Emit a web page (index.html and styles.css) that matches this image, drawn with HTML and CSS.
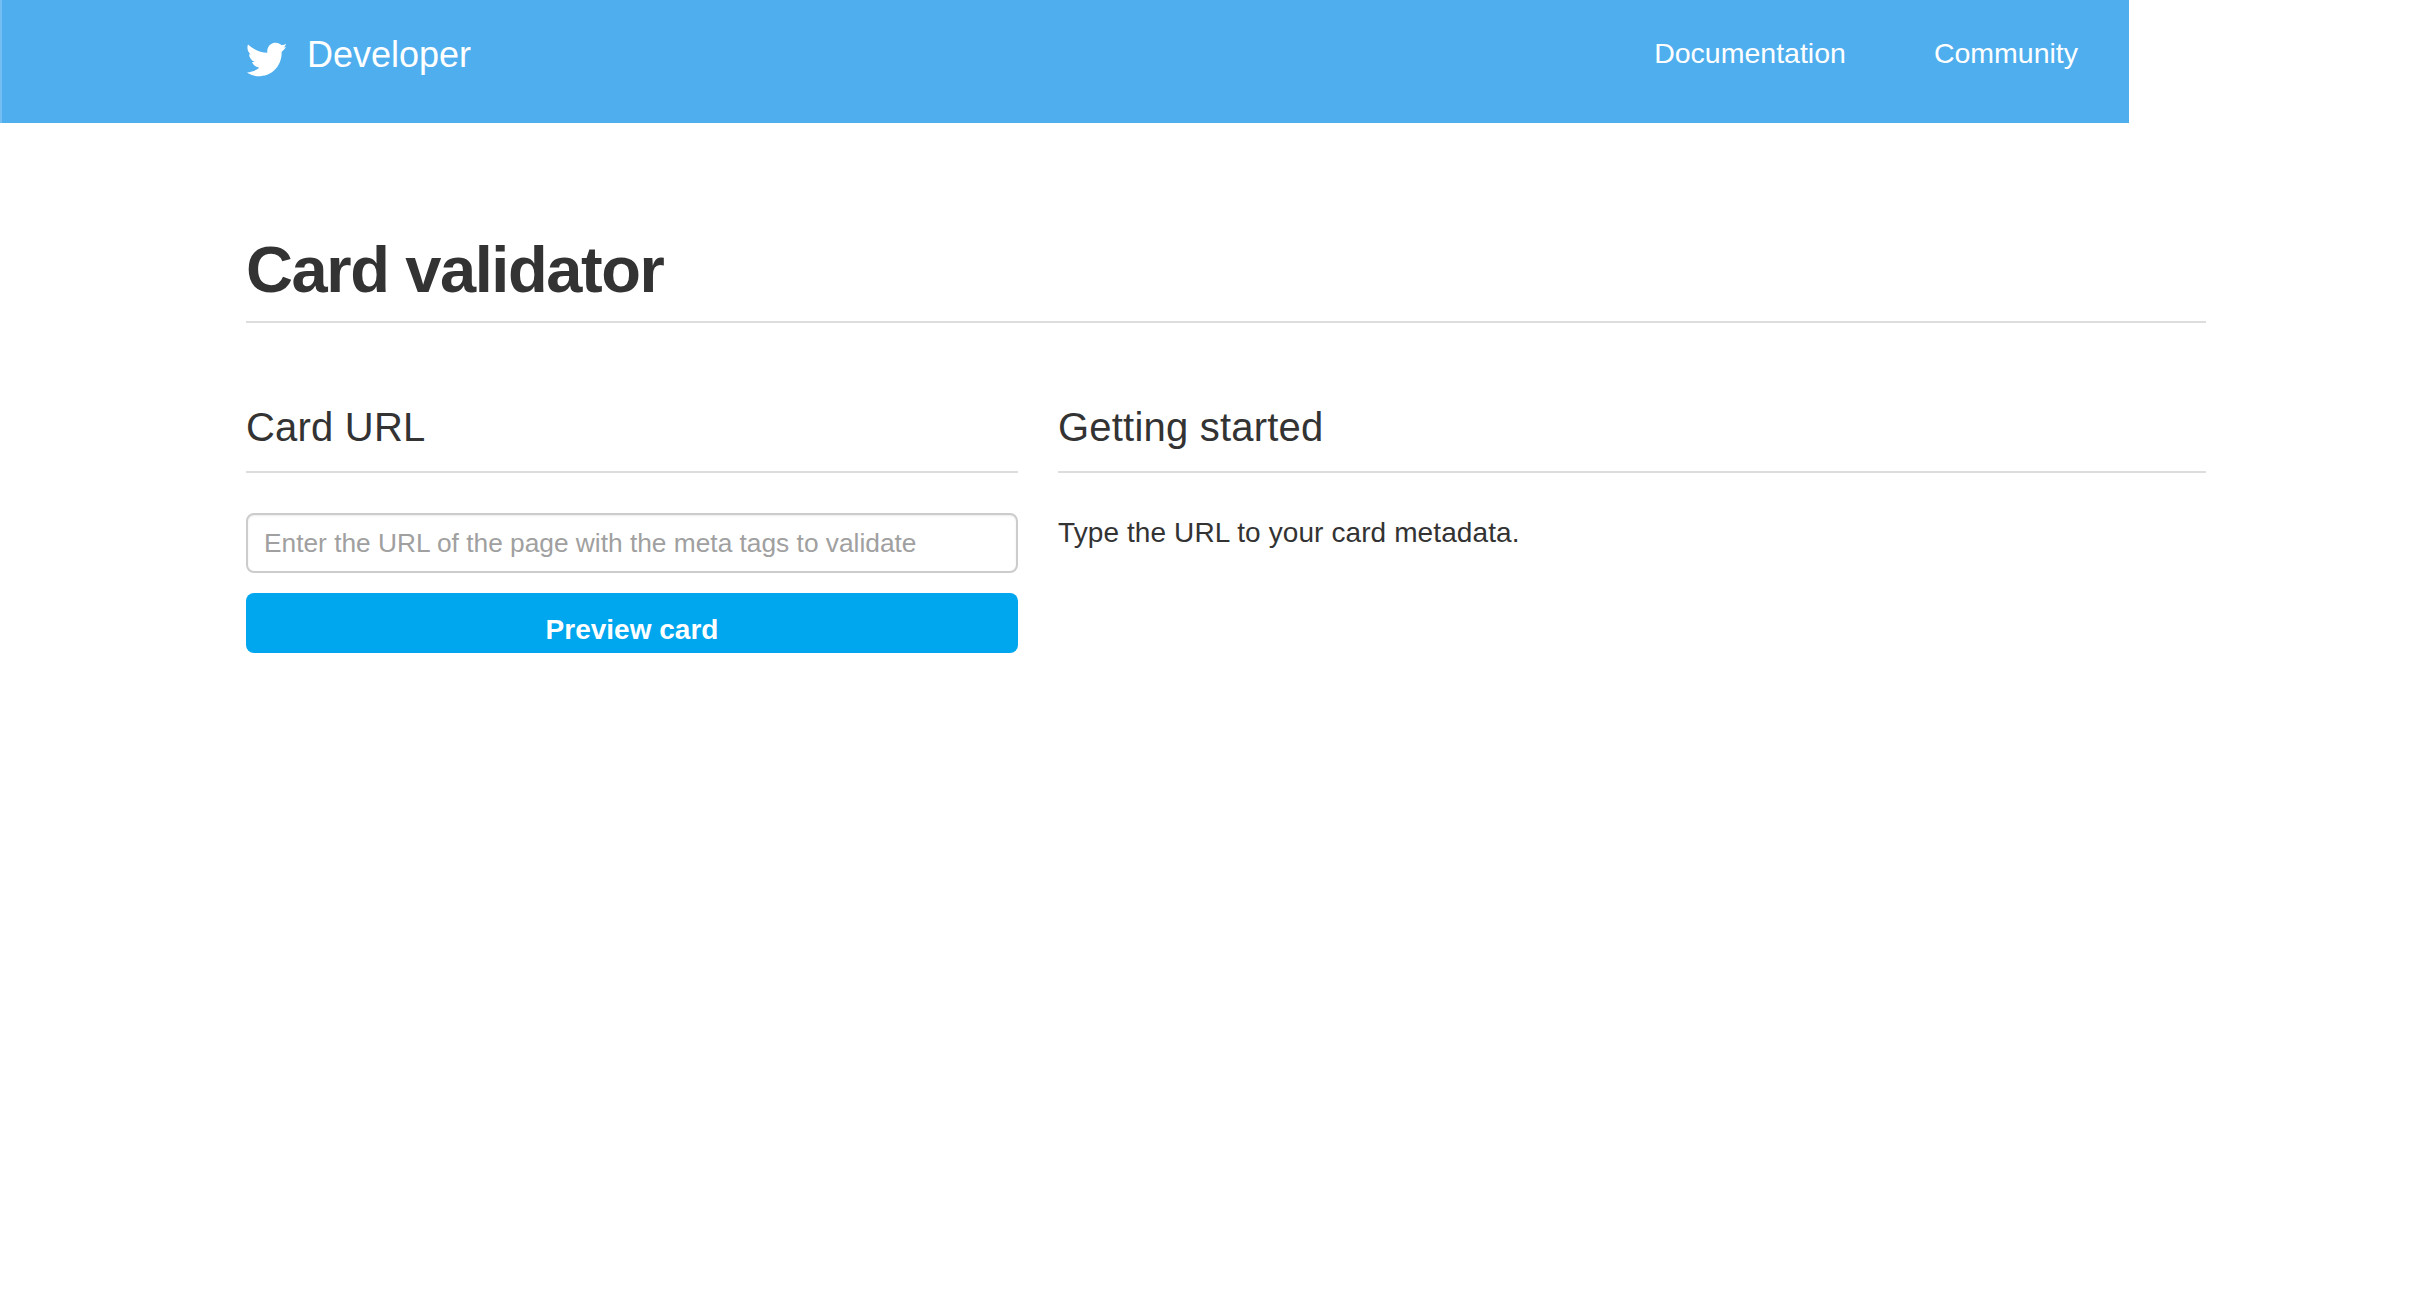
FILE: index.html
```html
<!DOCTYPE html>
<html lang="en">
<head>
<meta charset="utf-8">
<title>Card validator</title>
<link rel="stylesheet" href="styles.css">
</head>
<body>
<header class="topbar">
  <a class="brand" href="#">
    <svg class="bird" viewBox="48 68 126 104" aria-hidden="true"><path d="M168 73C163 76 159 77 155 77C150 72 142 69 134 70C120 72 110 84 112 100C90 99 70 90 54 75C50 85 53 97 62 105L57 104C58 114 64 123 74 127L66 128C70 137 78 143 88 145C78 153 66 157 51 159C62 167 76 171 91 170C132 168 156 134 155 97C160 93 165 88 168 82L160 85C164 82 167 78 168 73Z"/></svg>
    <span class="brand-name">Developer</span>
  </a>
  <nav class="nav">
    <a class="nav-link" href="#">Documentation</a>
    <a class="nav-link" href="#">Community</a>
  </nav>
</header>
<main class="page">
  <h1 class="title">Card validator</h1>
  <div class="columns">
    <section class="col">
      <h2 class="subtitle">Card URL</h2>
      <form class="form">
        <input class="url" type="text" placeholder="Enter the URL of the page with the meta tags to validate">
        <button class="submit" type="button">Preview card</button>
      </form>
    </section>
    <section class="col">
      <h2 class="subtitle">Getting started</h2>
      <p class="hint">Type the URL to your card metadata.</p>
    </section>
  </div>
</main>
</body>
</html>
```
FILE: styles.css
```css
* { box-sizing: border-box; }
html, body { margin: 0; padding: 0; background: #fff; }
body { font-family: "Liberation Sans", Arial, sans-serif; color: #333; }
a { text-decoration: none; color: inherit; }

.topbar {
  width: 2129px;
  height: 123px;
  background: #4eaeee;
  border-left: 2px solid #74bdf0;
  padding: 0 51px 0 244px;
  display: flex;
  justify-content: space-between;
  align-items: flex-start;
  color: #fff;
}
.brand { display: flex; align-items: flex-start; }
.bird { width: 42px; height: 35px; fill: #fff; margin-top: 42px; }
.brand-name { font-size: 36px; line-height: 40px; margin: 35px 0 0 19px; }
.nav { display: flex; gap: 88px; }
.nav-link { font-size: 28.5px; line-height: 34px; margin-top: 36px; }

.page { width: 1960px; margin-left: 246px; }
.title {
  margin: 0;
  padding-top: 109px;
  height: 200px;
  font-size: 65px;
  line-height: 76px;
  font-weight: 700;
  letter-spacing: -1.4px;
  border-bottom: 2px solid #ddd;
}
.columns { display: grid; grid-template-columns: 772px 1148px; gap: 40px; }
.subtitle {
  margin: 0;
  padding-top: 80px;
  height: 150px;
  font-size: 40px;
  line-height: 48px;
  font-weight: 400;
  letter-spacing: 0.2px;
  border-bottom: 2px solid #ddd;
}
.form { display: flex; flex-direction: column; gap: 20px; padding-top: 40px; }
.url {
  height: 60px;
  padding: 0 16px;
  border: 2px solid #ccc;
  border-radius: 8px;
  font: 26.3px "Liberation Sans", Arial, sans-serif;
  color: #333;
  box-shadow: inset 0 1px 2px rgba(0,0,0,.08);
}
.url::placeholder { color: #a0a0a0; opacity: 1; }
.submit {
  height: 60px;
  padding: 14px 0 0;
  border: 0;
  border-radius: 8px;
  background: #00a6ee;
  color: #fff;
  font: 700 28px "Liberation Sans", Arial, sans-serif;
}
.hint { margin: 0; padding-top: 43px; font-size: 28px; line-height: 34px; letter-spacing: 0.1px; color: #333; }
```
